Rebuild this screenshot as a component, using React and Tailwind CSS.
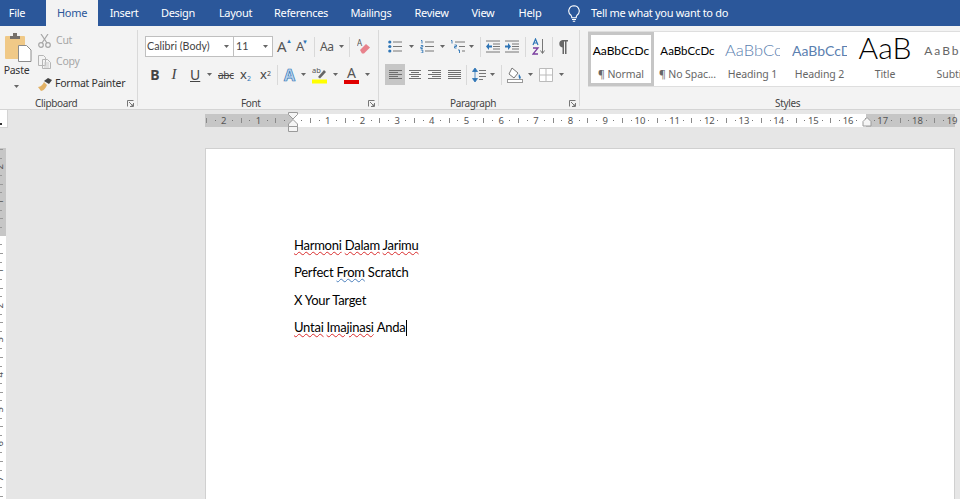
import React from "react";

const UI = { fontFamily: '"Noto Sans","Open Sans",sans-serif' };
const DOC = { fontFamily: 'Lato,"Open Sans",sans-serif' };

const Caret = ({ c = "" }) => (
  <svg width="5" height="3" viewBox="0 0 5 3" className={`shrink-0 ${c}`}><path d="M0 0h5L2.5 3z" fill="#666" /></svg>
);
const Sep = ({ c = "" }) => <div className={`w-px h-[20px] bg-[#d9d9d9] shrink-0 ${c}`} />;
const Launcher = ({ c = "" }) => (
  <svg width="7" height="7" viewBox="0 0 7 7" className={`shrink-0 ${c}`}>
    <path d="M.5 6.5v-6h6M6.5 3v3.5H3M2 2l4 4M4 6h2V4" fill="none" stroke="#777" strokeWidth="1" />
  </svg>
);
const Lines = ({ rows, w = 13, c = "" }) => (
  <svg width={w} height="13" viewBox={`0 0 ${w} 13`} className={`shrink-0 ${c}`}>
    {rows.map(([y, a, b], i) => <path key={i} d={`M${a} ${y}.5H${b}`} stroke="#6e6e6e" />)}
  </svg>
);
const Bullets = ({ c }) => (
  <svg width="14" height="13" viewBox="0 0 14 13" className={`shrink-0 ${c}`}>
    <circle cx="1.8" cy="2" r="1.6" fill="#2e75b6" /><circle cx="1.8" cy="6.5" r="1.6" fill="#2e75b6" /><circle cx="1.8" cy="11" r="1.6" fill="#2e75b6" />
    <path d="M5 2h9M5 6.5h9M5 11h9" stroke="#777" />
  </svg>
);
const Numbers = ({ c }) => (
  <svg width="14" height="13" viewBox="0 0 14 13" className={`shrink-0 ${c}`}>
    <path d="M1 .5h1v3M.8 5.5h2v1.5h-2v1.500h2M.8 10h2v3h-2" fill="none" stroke="#2e75b6" strokeWidth=".9" />
    <path d="M5 2h9M5 6.500h9M5 11h9" stroke="#777" />
  </svg>
);
const Multi = ({ c }) => (
  <svg width="15" height="13" viewBox="0 0 15 13" className={`shrink-0 ${c}`}>
    <path d="M1 .5h1v3M4.500 5h2v1.500h-2v1.500h2M8 10h1.500v3" fill="none" stroke="#2e75b6" strokeWidth=".9" />
    <path d="M5 2h10M9 6.500h6M12 11h3" stroke="#777" />
  </svg>
);
const Indent = ({ flip, c }) => (
  <svg width="14" height="13" viewBox="0 0 14 13" className={`shrink-0 ${c}`}>
    <path d="M0 1h14M7 4h7M7 6.500h7M7 9h7M0 12h14" stroke="#777" />
    <path d={flip ? "M0 5.500h3V3l3 3.500L3 10V7.500H0z" : "M6 5.500H3V3L0 6.500 3 10V7.500h3z"} fill="#2e75b6" />
  </svg>
);
const Sort = ({ c }) => (
  <svg width="14" height="17" viewBox="0 0 14 17" className={`shrink-0 ${c}`}>
    <path d="M1 7l2.500-6L6 7M2 5h3" fill="none" stroke="#2e75b6" strokeWidth="1.200" />
    <path d="M1 10h5L1 16h5" fill="none" stroke="#7b3fa0" strokeWidth="1.300" />
    <path d="M10.500 1v14M8.500 12.500l2 3 2-3" fill="none" stroke="#777" />
  </svg>
);
const Pilcrow = ({ c }) => (
  <svg width="10" height="14" viewBox="0 0 10 14" className={`shrink-0 ${c}`}>
    <path d="M4.500 0H10v1.500H8.500V14H7V1.500H6V14H4.500V7.500A3.800 3.800 0 0 1 4.500 0z" fill="#666" />
  </svg>
);
const LineSp = ({ c }) => (
  <svg width="14" height="16" viewBox="0 0 14 16" className={`shrink-0 ${c}`}>
    <path d="M3 1L.5 4.500h5zM3 15L.5 11.500h5zM3 4v8" fill="#2e75b6" stroke="#2e75b6" strokeWidth=".8" />
    <path d="M7 3.500h7M7 6.500h7M7 9.500h7M7 12.500h4" stroke="#777" />
  </svg>
);
const Shading = ({ c }) => (
  <svg width="16" height="16" viewBox="0 0 16 16" className={`shrink-0 ${c}`}>
    <path d="M5 1l6 5-4 5-5-4z" fill="#fff" stroke="#777" />
    <path d="M12 7c1 2 2.500 3 1.500 4.500S11 10 12 7z" fill="#2e75b6" />
    <rect x=".5" y="12.500" width="15" height="3" fill="#fff" stroke="#999" />
  </svg>
);
const Borders = ({ c }) => (
  <svg width="14" height="14" viewBox="0 0 14 14" className={`shrink-0 ${c}`}>
    <path d="M.5.5h13v13H.5zM7 .5v13M.5 7h13" fill="#fff" stroke="#bbb" />
  </svg>
);
const Eraser = ({ c }) => (
  <svg width="14" height="15" viewBox="0 0 14 15" className={`shrink-0 ${c}`}>
    <text x="0" y="7" fontSize="8" fill="#555" fontFamily="Noto Sans">A</text>
    <path d="M3 11l6-6 4 3.500-6 6H5z" fill="#e8828c" />
  </svg>
);
const Highlighter = ({ c }) => (
  <svg width="15" height="18" viewBox="0 0 15 18" className={`shrink-0 ${c}`}>
    <text x="0" y="7" fontSize="7.500" fill="#555" fontFamily="Noto Sans">ab</text>
    <path d="M6 11l6-7 2 2-6 6.500z" fill="#666" />
    <rect x="0" y="13.500" width="15" height="4" fill="#ffff00" />
  </svg>
);
const Paste = () => (
  <svg width="27" height="29" viewBox="0 0 27 29" className="shrink-0 ml-[5px]">
    <rect x="0" y="3" width="20" height="23" rx="1" fill="#f0c987" />
    <path d="M5 3h3V0h4v3h3v3H5z" fill="#77716b" />
    <path d="M13.500 12.500h8l4.500 4.500v11.500H13.500z" fill="#fff" stroke="#8c8c8c" />
  </svg>
);
const Scissors = () => (
  <svg width="13" height="14" viewBox="0 0 13 14" className="shrink-0">
    <circle cx="3" cy="11" r="2.300" fill="none" stroke="#a6a6a6" strokeWidth="1.200" />
    <circle cx="10" cy="11" r="2.300" fill="none" stroke="#a6a6a6" strokeWidth="1.200" />
    <path d="M4 9L10 0M9 9L3 0" stroke="#a6a6a6" strokeWidth="1.200" />
  </svg>
);
const Copy = () => (
  <svg width="13" height="14" viewBox="0 0 13 14" className="shrink-0">
    <path d="M.5.5h5l2 2v8h-7zM4.500 4.500h5l3 3v6h-8z" fill="#f3f3f3" stroke="#b5b5b5" />
    <path d="M6 8h5M6 10h5M6 12h5" stroke="#ccc" />
  </svg>
);
const Painter = () => (
  <svg width="15" height="14" viewBox="0 0 15 14" className="shrink-0">
    <path d="M0 10c3 0 5-3 6-5l3 3c-1 3-4 6-6 6z" fill="#e3b265" />
    <path d="M6 4l4-3 4 2-3 4z" fill="#444" />
  </svg>
);
const Bulb = () => (
  <svg width="12" height="17" viewBox="0 0 12 17" className="shrink-0">
    <path d="M6 .7a5.300 5.300 0 0 0-3 9.600c.6.500.8 1.500.8 2.400h4.400c0-.9.200-1.900.8-2.400A5.300 5.300 0 0 0 6 .7zM4 14.500h4M4.800 16.300h2.400" fill="none" stroke="#fff" strokeWidth="1.100" />
  </svg>
);

const tabs = [
  ["File", "w-[46px] pr-[12px]"],
  ["Home", "w-[52px] bg-[#f3f3f3] text-[#2b579a]"],
  ["Insert", "w-[52px]"],
  ["Design", "w-[56px]"],
  ["Layout", "w-[59px]"],
  ["References", "w-[72px]"],
  ["Mailings", "w-[68px]"],
  ["Review", "w-[53px]"],
  ["View", "w-[50px]"],
  ["Help", "w-[44px]"],
];

const cells = Array.from({ length: 87 }, (_, i) => i - 10);
const vcells = Array.from({ length: 42 }, (_, i) => i - 10);

function Mark({ k }) {
  if (k === 0) return null;
  if (k % 4 === 0) return <span className="text-[9.5px] leading-none text-[#555]">{Math.abs(k) / 4}</span>;
  if (k % 2 === 0) return <span className="w-px h-[5px] bg-[#8a8a8a]" />;
  return <span className="w-px h-px bg-[#777]" />;
}
function VMark({ k }) {
  if (k === 0) return null;
  if (k % 4 === 0) return <span className="text-[9.5px] leading-none text-[#555] -rotate-90 -ml-[3px]">{Math.abs(k) / 4}</span>;
  if (k % 2 === 0) return <span className="h-px w-[3px] bg-[#999]" />;
  return <span className="h-px w-[2px] bg-[#999]" />;
}

function StyleItem({ w, sample, label, sc, lc = "" }) {
  return (
    <div className={`${w} shrink-0 flex flex-col items-center overflow-hidden`}>
      <div className="h-[34px] shrink-0 pt-[3px] w-full flex items-center justify-center overflow-hidden">
        <span className={`whitespace-nowrap ${sc}`} style={DOC}>{sample}</span>
      </div>
      <span className={`text-[10.5px] tracking-[-0.1px] leading-[16px] text-[#666] whitespace-nowrap ${lc}`}>{label}</span>
    </div>
  );
}

const labelRow = "h-[10px] shrink-0 mt-[2px] flex items-center text-[10px] tracking-[-0.35px] leading-[14px]";

export default function App() {
  return (
    <div className="w-[960px] h-[499px] overflow-hidden flex flex-col bg-[#e6e6e6]" style={UI}>
      {/* Title tabs */}
      <div className="h-[26px] shrink-0 bg-[#2b579a] flex items-stretch text-white text-[11px] tracking-[-0.3px]">
        {tabs.map(([t, c]) => (
          <div key={t} className={`flex items-center justify-center shrink-0 ${c}`}>{t}</div>
        ))}
        <div className="ml-[16px] flex items-center"><Bulb /></div>
        <div className="ml-[11px] flex items-center">Tell me what you want to do</div>
      </div>

      {/* Ribbon */}
      <div className="h-[84px] shrink-0 bg-[#f3f3f3] border-b border-[#d4d4d4] flex items-start pt-[4px] text-[#444]">
        {/* Clipboard */}
        <div className="w-[138px] h-[76px] shrink-0 border-r border-[#d9d9d9] flex flex-col">
          <div className="h-[66px] shrink-0 flex">
            <div className="w-[38px] pt-[3px] flex flex-col shrink-0">
              <Paste />
              <div className="w-[33px] text-center text-[10.5px] tracking-[-0.25px] leading-[15px] mt-[1px] text-[#333]">Paste</div>
              <div className="w-[33px] flex justify-center mt-[7px]"><Caret /></div>
            </div>
            <div className="flex flex-col text-[10.5px] tracking-[-0.25px]">
              <div className="h-[21px] flex items-center gap-[5px] text-[#a6a6a6]"><Scissors />Cut</div>
              <div className="h-[22px] flex items-center gap-[5px] text-[#a6a6a6]"><Copy />Copy</div>
              <div className="h-[21px] flex items-center gap-[2px] text-[#333]"><Painter />Format Painter</div>
            </div>
          </div>
          <div className={`${labelRow} justify-between`}>
            <span className="ml-[35px]">Clipboard</span><Launcher c="mr-[3px]" />
          </div>
        </div>

        {/* Font */}
        <div className="w-[241px] h-[76px] shrink-0 border-r border-[#d9d9d9] flex flex-col">
          <div className="h-[66px] shrink-0 pt-[6px] flex flex-col">
            <div className="h-[21px] flex items-center">
              <div className="ml-[7px] w-[128px] h-[21px] shrink-0 bg-white border border-[#bfbfbf] flex items-center text-[10.7px] text-[#444]">
                <div className="w-[88px] h-full flex items-center justify-between pl-[1px] pr-[4px] border-r border-[#bfbfbf] shrink-0" style={DOC}>
                  <span>Calibri (Body)</span><Caret />
                </div>
                <div className="flex-1 flex items-center justify-between pl-[2px] pr-[4px]" style={DOC}><span>11</span><Caret /></div>
              </div>
              <div className="ml-[4px] w-[13px] text-[15px] leading-none text-[#555] relative">A<span className="absolute -top-[1px] -right-[2px] text-[6px] text-[#2e75b6]">▲</span></div>
              <div className="ml-[6px] w-[11px] text-[13px] leading-none text-[#555] relative">A<span className="absolute -top-[1px] -right-[1px] text-[6px] text-[#2e75b6]">▼</span></div>
              <Sep c="ml-[7px]" />
              <div className="ml-[5px] w-[16px] text-[12px] tracking-[-0.3px] leading-none text-[#555]">Aa</div>
              <Caret c="ml-[3px]" />
              <Sep c="ml-[5px]" />
              <Eraser c="ml-[7px]" />
            </div>
            <div className="h-[21px] mt-[7px] flex items-center text-[#444]">
              <span className="ml-[12px] w-[10px] text-center text-[14px] font-bold leading-none">B</span>
              <span className="ml-[9px] w-[10px] text-center text-[15px] italic leading-none" style={{ fontFamily: "Liberation Serif" }}>I</span>
              <span className="ml-[11px] w-[10px] text-center text-[14px] underline leading-none">U</span>
              <Caret c="ml-[7px]" />
              <span className="ml-[6px] w-[15px] text-center text-[10px] tracking-[-0.3px] line-through leading-none">abc</span>
              <span className="ml-[7px] w-[12px] text-[13px] leading-none">x<sub className="text-[7px] text-[#2e75b6]">2</sub></span>
              <span className="ml-[8px] w-[12px] text-[13px] leading-none">x<sup className="text-[7px] text-[#444]">2</sup></span>
              <Sep c="ml-[5px]" />
              <span className="ml-[6px] w-[12px] text-[16px] leading-none text-[#bcd4ee] font-bold" style={{ WebkitTextStroke: "0.7px #2e75b6" }}>A</span>
              <Caret c="ml-[5px]" />
              <Highlighter c="ml-[6px]" />
              <Caret c="ml-[6px]" />
              <div className="ml-[6px] w-[15px] flex flex-col items-center shrink-0">
                <span className="text-[14px] leading-[14px] text-[#555]">A</span>
                <span className="w-[15px] h-[4px] bg-[#e00000]" />
              </div>
              <Caret c="ml-[6px]" />
            </div>
          </div>
          <div className={`${labelRow} justify-between`}>
            <span className="ml-[103px]">Font</span><Launcher c="mr-[3px]" />
          </div>
        </div>

        {/* Paragraph */}
        <div className="w-[201px] h-[76px] shrink-0 border-r border-[#d9d9d9] flex flex-col">
          <div className="h-[66px] shrink-0 pt-[6px] flex flex-col">
            <div className="h-[21px] flex items-center">
              <Bullets c="ml-[9px]" />
              <Caret c="ml-[7px]" />
              <Numbers c="ml-[6px]" />
              <Caret c="ml-[6px]" />
              <Multi c="ml-[5px]" />
              <Caret c="ml-[4px]" />
              <Sep c="ml-[6px]" />
              <Indent c="ml-[5px]" />
              <Indent flip c="ml-[5px]" />
              <Sep c="ml-[6px]" />
              <Sort c="ml-[6px]" />
              <Sep c="ml-[6px]" />
              <Pilcrow c="ml-[5px]" />
            </div>
            <div className="h-[21px] mt-[7px] flex items-center">
              <div className="ml-[6px] w-[20px] h-[21px] bg-[#c6c6c6] flex items-center justify-center shrink-0">
                <Lines w={13} rows={[[2, 0, 13], [4, 0, 9], [6, 0, 13], [8, 0, 9], [10, 0, 13]]} />
              </div>
              <Lines c="ml-[4px]" w={12} rows={[[2, 0, 12], [4, 2, 10], [6, 0, 12], [8, 2, 10], [10, 0, 12]]} />
              <Lines c="ml-[7px]" w={13} rows={[[2, 0, 13], [4, 4, 13], [6, 0, 13], [8, 4, 13], [10, 0, 13]]} />
              <Lines c="ml-[7px]" w={13} rows={[[2, 0, 13], [4, 0, 13], [6, 0, 13], [8, 0, 13], [10, 0, 13]]} />
              <Sep c="ml-[5px]" />
              <LineSp c="ml-[5px]" />
              <Caret c="ml-[4px]" />
              <Sep c="ml-[6px]" />
              <Shading c="ml-[5px]" />
              <Caret c="ml-[5px]" />
              <Borders c="ml-[6px]" />
              <Caret c="ml-[6px]" />
            </div>
          </div>
          <div className={`${labelRow} justify-between`}>
            <span className="ml-[71px]">Paragraph</span><Launcher c="mr-[3px]" />
          </div>
        </div>

        {/* Styles */}
        <div className="flex-1 min-w-0 h-[76px] flex flex-col">
          <div className="h-[66px] shrink-0 pl-[8px] pt-[1px]">
            <div className="h-[56px] bg-white border-y border-[#dedede] flex items-stretch overflow-hidden">
              <div className="w-[66px] shrink-0 border-[3px] border-[#c6c6c6] flex flex-col items-center overflow-hidden">
                <div className="h-[31px] shrink-0 flex items-center justify-center"><span className="text-[12px] text-black whitespace-nowrap" style={DOC}>AaBbCcDc</span></div>
                <span className="text-[10.5px] tracking-[-0.1px] leading-[16px] text-[#666] whitespace-nowrap">¶ Normal</span>
              </div>
              <StyleItem w="w-[67px]" sample="AaBbCcDc" label="¶ No Spac..." sc="text-[11.5px] text-black" />
              <StyleItem w="w-[63px]" sample="AaBbCc" label="Heading 1" sc="text-[16.5px] font-light text-[#5b7fb0] w-[55px] overflow-hidden" />
              <StyleItem w="w-[71px]" sample="AaBbCcD" label="Heading 2" sc="text-[14px] text-[#5b7fb0] w-[55px] overflow-hidden" />
              <StyleItem w="w-[60px]" sample="AaB" label="Title" sc="text-[30px] font-light leading-[36px] text-black -mt-[7px]" />
              <StyleItem w="w-[80px]" sample="AaBbCcDc" label="Subtitle" sc="text-[12px] text-[#666] tracking-[2px] ml-[11px]" />
            </div>
          </div>
          <div className={labelRow}>
            <span className="ml-[195px]">Styles</span>
          </div>
        </div>
      </div>

      {/* Horizontal ruler */}
      <div className="h-[38px] shrink-0 flex items-start">
        <div className="w-[8px] h-[18px] bg-white border-r border-b border-[#d4d4d4] shrink-0 flex items-end pb-[2px]"><span className="w-[2px] h-[2px] bg-[#333]" /></div>
        <div className="ml-[197px] mt-[4px] w-[750px] h-[13px] relative flex shrink-0">
          <div className="w-[88px] bg-[#c6c6c6]" />
          <div className="w-[573px] bg-white" />
          <div className="w-[89px] bg-[#c6c6c6]" />
          <div className="absolute top-0 -left-[3px] h-[13px] flex">
            {cells.map((k) => (
              <div key={k} className="w-[8.675px] h-[13px] shrink-0 flex items-center justify-center overflow-visible"><Mark k={k} /></div>
            ))}
          </div>
          <svg width="12" height="21" viewBox="0 0 12 21" className="absolute -top-[2px] left-[82px]">
            <path d="M1.500.5h9v2L6 7 1.500 2.500zM6 7.500l4.500 4.500v2.500h-9V12zM1.500 14.500h9v5h-9z" fill="#f5f5f5" stroke="#9a9a9a" />
          </svg>
          <svg width="10" height="10" viewBox="0 0 10 10" className="absolute top-[3px] left-[657px]">
            <path d="M5 .5l4 4v4.500H1V4.500z" fill="#f5f5f5" stroke="#9a9a9a" />
          </svg>
        </div>
      </div>

      {/* Work area */}
      <div className="flex-1 min-h-0 flex items-stretch overflow-hidden">
        <div className="w-[6px] shrink-0 relative overflow-hidden flex flex-col bg-white">
          <div className="h-[88px] bg-[#c6c6c6] shrink-0" />
          <div className="absolute left-0 -top-[3px] w-[6px] flex flex-col">
            {vcells.map((k) => (
              <div key={k} className="h-[8.675px] w-[6px] shrink-0 flex items-center justify-start"><VMark k={k} /></div>
            ))}
          </div>
        </div>
        <div className="ml-[199px] w-[750px] shrink-0 bg-white border-x border-t border-[#d0d0d0] pt-[82.5px] pl-[88px] text-[13px] tracking-[-0.25px] text-black" style={DOC}>
          <p className="h-[27.5px] leading-[27.5px] whitespace-nowrap">
            <span className="underline decoration-wavy decoration-[#d92b2b] decoration-1">Harmoni</span> <span className="underline decoration-wavy decoration-[#d92b2b] decoration-1">Dalam</span> <span className="underline decoration-wavy decoration-[#d92b2b] decoration-1">Jarimu</span>
          </p>
          <p className="h-[27.5px] leading-[27.5px] whitespace-nowrap">
            Perfect <span className="underline decoration-wavy decoration-[#4a7ebb] decoration-1">From</span> Scratch
          </p>
          <p className="h-[27.5px] leading-[27.5px] whitespace-nowrap">X Your Target</p>
          <p className="h-[27.5px] leading-[27.5px] whitespace-nowrap flex items-center">
            <span className="underline decoration-wavy decoration-[#d92b2b] decoration-1">Untai</span>
            <span className="w-[3px]" />
            <span className="underline decoration-wavy decoration-[#d92b2b] decoration-1">Imajinasi</span>
            <span className="w-[3px]" />
            <span>Anda</span>
            <span className="w-px h-[16px] bg-black ml-px" />
          </p>
        </div>
      </div>
    </div>
  );
}
